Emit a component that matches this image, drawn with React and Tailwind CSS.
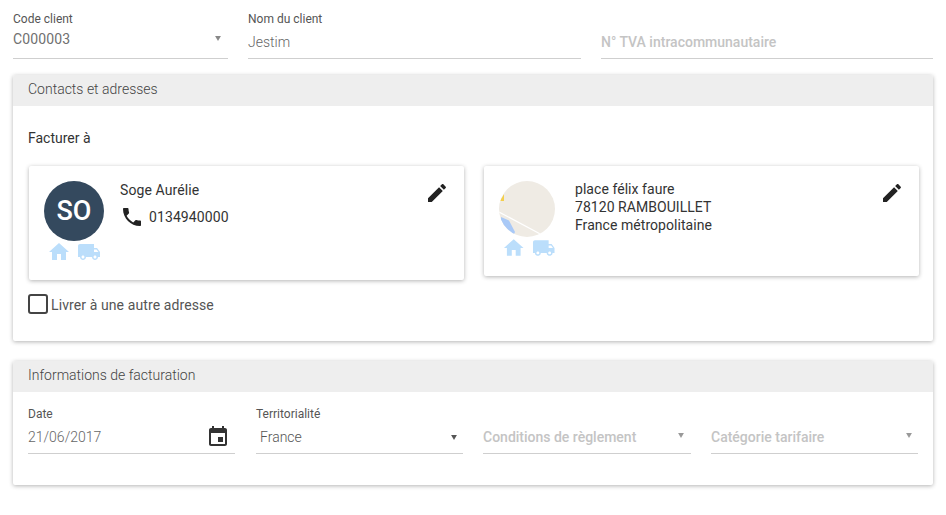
const ICONS = {
  edit: "M3 17.25V21h3.75L17.81 9.94l-3.75-3.75L3 17.25zM20.71 7.04c.39-.39.39-1.02 0-1.41l-2.34-2.34c-.39-.39-1.02-.39-1.41 0l-1.83 1.83 3.75 3.75 1.83-1.83z",
  phone: "M6.62 10.79c1.44 2.83 3.76 5.14 6.59 6.59l2.2-2.2c.27-.27.67-.36 1.02-.24 1.12.37 2.33.57 3.57.57.55 0 1 .45 1 1V20c0 .55-.45 1-1 1-9.39 0-17-7.61-17-17 0-.55.45-1 1-1h3.5c.55 0 1 .45 1 1 0 1.25.2 2.45.57 3.57.11.35.03.74-.25 1.02l-2.2 2.2z",
  home: "M10 20v-6h4v6h5v-8h3L12 3 2 12h3v8z",
  truck: "M20 8h-3V4H3c-1.1 0-2 .9-2 2v11h2c0 1.66 1.34 3 3 3s3-1.34 3-3h6c0 1.66 1.34 3 3 3s3-1.34 3-3h2v-5l-3-4zM6 18.5c-.83 0-1.5-.67-1.5-1.5s.67-1.5 1.5-1.5 1.5.67 1.5 1.5-.67 1.5-1.5 1.5zm13.5-9l1.96 2.5H17V9.5h2.5zm-1.5 9c-.83 0-1.5-.67-1.5-1.5s.67-1.5 1.5-1.5 1.5.67 1.5 1.5-.67 1.5-1.5 1.5z",
  event: "M17 12h-5v5h5v-5zM16 1v2H8V1H6v2H5c-1.11 0-1.99.9-1.99 2L3 19c0 1.1.89 2 2 2h14c1.1 0 2-.9 2-2V5c0-1.1-.9-2-2-2h-1V1h-2zm3 18H5V8h14v11z",
};

function Icon({ name, className }) {
  return (
    <svg viewBox="0 0 24 24" className={className} fill="currentColor" aria-hidden="true">
      <path d={ICONS[name]} />
    </svg>
  );
}

function Arrow({ className }) {
  return (
    <svg viewBox="0 0 7 6" className={"h-[5px] w-[6px] shrink-0 " + className} fill="currentColor" aria-hidden="true">
      <path d="M0 0h7L3.5 6z" />
    </svg>
  );
}

function Field({ label, className = "", children }) {
  return (
    <div className={"flex h-[47px] flex-col border-b border-[#cfcfcf] " + className}>
      <div className="h-[14px] text-xs leading-[14px] text-[#555]">{label}</div>
      {children}
    </div>
  );
}

function Section({ title, className = "", children }) {
  return (
    <section className={"rounded-[2px] bg-white shadow-[0_1px_4px_rgba(0,0,0,0.3)] " + className}>
      <h2 className="h-[31px] rounded-t-[2px] bg-[#eeeeee] pl-[15px] text-sm font-light leading-[28px] text-[#444]">
        {title}
      </h2>
      {children}
    </section>
  );
}

function Badges({ className = "" }) {
  return (
    <div className={"flex items-center text-[#bbdefb] " + className}>
      <Icon name="home" className="h-6 w-6" />
      <Icon name="truck" className="ml-[6px] h-6 w-6" />
    </div>
  );
}

function MapAvatar() {
  return (
    <svg viewBox="0 0 56 56" className="h-14 w-14 rounded-full" aria-hidden="true">
      <rect width="56" height="56" fill="#efebe4" />
      <path d="M5 13v7H1z" fill="#f4cf4c" />
      <path d="M2 36l8 3.5 6 11.5-2 4H0z" fill="#a9c9f7" />
      <path d="M0 31l45 24" stroke="#ffffff" strokeWidth="1.2" fill="none" />
    </svg>
  );
}

export default function App() {
  return (
    <div className="min-h-[515px] bg-white px-[13px] pt-3 text-[#333] [font-family:Roboto,'Liberation_Sans',sans-serif]">
      <div className="flex gap-5">
        <Field label="Code client" className="w-[215px]">
          <div className="flex h-[25px] items-center justify-between pr-[7px] text-sm tracking-[0.15px] text-[#707070]">
            <span>C000003</span>
            <Arrow className="text-[#888]" />
          </div>
        </Field>
        <Field label="Nom du client" className="w-[333px]">
          <div className="flex h-[31px] items-center text-sm font-light text-[#666]">Jestim</div>
        </Field>
        <Field label="" className="w-[332px]">
          <div className="flex h-[31px] items-center text-sm font-medium text-[#c4c4c4]">N° TVA intracommunautaire</div>
        </Field>
      </div>

      <Section title="Contacts et adresses" className="mt-4 h-[266px]">
        <div className="pl-[16px] pr-[14px] pt-[23px]">
          <div className="-ml-px h-[18px] text-sm leading-[18px] text-[#333]">Facturer à</div>
          <div className="mt-[19px] flex items-start gap-5">
            <article className="flex h-[114px] w-[435px] rounded-[2px] bg-white px-[15px] pt-[15px] shadow-[0_1px_4px_rgba(0,0,0,0.3)]">
              <div className="w-[60px] shrink-0">
                <div className="flex h-[60px] w-[60px] items-center justify-center rounded-full bg-[#34495e] pt-px text-[27px] font-medium leading-none text-white">
                  SO
                </div>
                <Badges className="-mt-px ml-[3px] h-6" />
              </div>
              <div className="ml-4 flex-1 text-sm text-[#333]">
                <div className="h-[18px] leading-[18px] tracking-[0.1px]">Soge Aurélie</div>
                <div className="mt-[6px] flex items-center gap-[5px]">
                  <Icon name="phone" className="h-6 w-6 text-[#222]" />
                  <span className="tracking-[0.1px]">0134940000</span>
                </div>
              </div>
              <Icon name="edit" className="h-6 w-6 shrink-0 text-[#222]" />
            </article>
            <article className="flex h-[110px] w-[435px] rounded-[2px] bg-white pl-[15px] pr-[15px] pt-[15px] shadow-[0_1px_4px_rgba(0,0,0,0.3)]">
              <div className="w-14 shrink-0">
                <MapAvatar />
                <Badges className="-mt-px ml-[3px] h-6" />
              </div>
              <div className="-mt-px ml-5 flex-1 text-sm leading-[18px] tracking-[0.05px] text-[#333]">
                <div>place félix faure</div>
                <div>78120 RAMBOUILLET</div>
                <div>France métropolitaine</div>
              </div>
              <Icon name="edit" className="h-6 w-6 shrink-0 text-[#222]" />
            </article>
          </div>
          <div className="mt-[13px] -ml-[1px] flex items-center">
            <span className="h-5 w-5 rounded-[3px] border-2 border-[#444]" />
            <span className="ml-[3px] pt-[2px] text-sm tracking-[0.1px] text-[#555]">Livrer à une autre adresse</span>
          </div>
        </div>
      </Section>

      <Section title="Informations de facturation" className="mt-5 h-[124px]">
        <div className="flex gap-5 px-[15px] pt-[15px]">
          <Field label="Date" className="mr-px w-[207px]">
            <div className="flex h-[32px] items-center justify-between pr-[5px] text-sm font-light text-[#666]">
              <span>21/06/2017</span>
              <Icon name="event" className="h-6 w-6 text-[#333]" />
            </div>
          </Field>
          <Field label="Territorialité" className="w-[207px]">
            <div className="flex h-[32px] items-center justify-between pl-1 pr-[6px] text-sm font-light text-[#555]">
              <span>France</span>
              <Arrow className="text-[#555]" />
            </div>
          </Field>
          <Field label="" className="w-[208px]">
            <div className="flex h-[32px] items-center justify-between pr-[7px] text-sm font-medium text-[#c4c4c4]">
              <span>Conditions de règlement</span>
              <Arrow className="-mt-1 text-[#999]" />
            </div>
          </Field>
          <Field label="" className="w-[207px]">
            <div className="flex h-[32px] items-center justify-between pr-[6px] text-sm font-medium text-[#c4c4c4]">
              <span>Catégorie tarifaire</span>
              <Arrow className="-mt-1 text-[#999]" />
            </div>
          </Field>
        </div>
      </Section>
    </div>
  );
}
